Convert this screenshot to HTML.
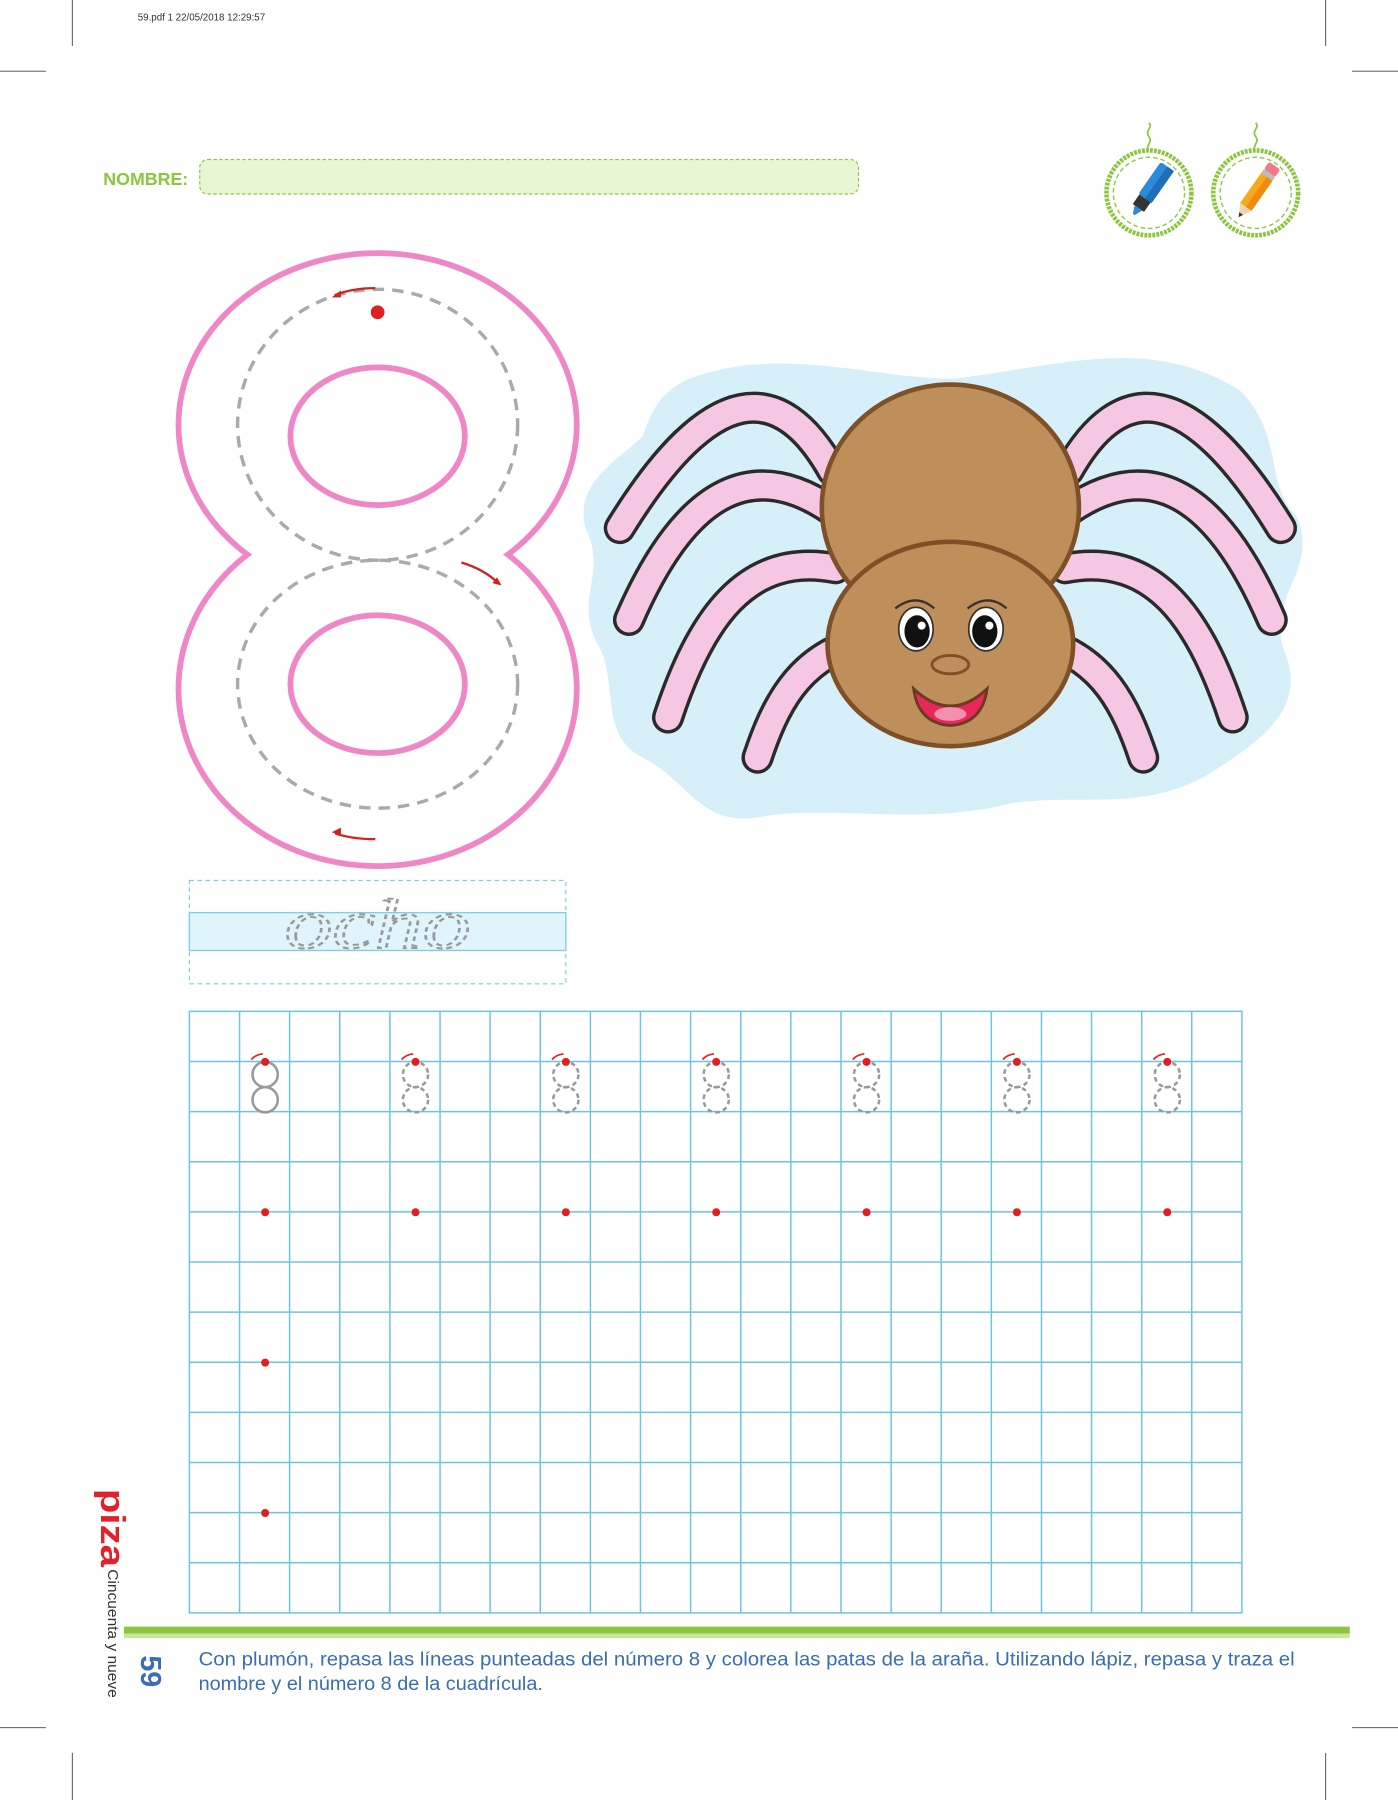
<!DOCTYPE html>
<html><head><meta charset="utf-8"><style>
html,body{margin:0;padding:0;background:#fff;}
svg{display:block;}
</style></head><body>
<svg width="1398" height="1800" viewBox="0 0 1218 1568" preserveAspectRatio="none" xmlns="http://www.w3.org/2000/svg" font-family="Liberation Sans, sans-serif">
<g stroke="#444" stroke-width="0.8">
<line x1="63" y1="0" x2="63" y2="40"/><line x1="1155" y1="0" x2="1155" y2="40"/>
<line x1="0" y1="62" x2="40" y2="62"/><line x1="1178" y1="62" x2="1218" y2="62"/>
<line x1="0" y1="1505" x2="40" y2="1505"/><line x1="1178" y1="1505" x2="1218" y2="1505"/>
<line x1="63" y1="1527" x2="63" y2="1568"/><line x1="1155" y1="1527" x2="1155" y2="1568"/>
</g>
<text x="120" y="18" font-size="8.5" fill="#333">59.pdf  1  22/05/2018  12:29:57</text>

<text x="90" y="161" font-size="15.5" fill="#8cc63f" font-weight="bold">NOMBRE:</text>
<rect x="174" y="139" width="574" height="30" rx="7" fill="#e7f6d3" stroke="#8cc63f" stroke-width="1" stroke-dasharray="3 2"/>

<g>
<path d="M1001,132 c-4,-5 4,-8 0,-13 c-4,-5 4,-8 0,-12" stroke="#8cc63f" stroke-width="1.5" fill="none"/>
<circle cx="1001" cy="168" r="37" fill="#fff" stroke="#8cc63f" stroke-width="4" stroke-dasharray="2.5 1"/>
<circle cx="1001" cy="168" r="31" fill="none" stroke="#8cc63f" stroke-width="1.2" stroke-dasharray="4 2.5"/>
<g transform="rotate(35 1001 168)">
<rect x="994" y="140" width="14" height="34" rx="2" fill="#2d8ad8"/>
<rect x="1001" y="140" width="7" height="34" fill="#1f6eb8"/>
<rect x="995" y="174" width="12" height="10" fill="#333"/>
<path d="M997,184 h8 l-3,7 h-2z" fill="#2d8ad8"/>
</g>
<path d="M1094,132 c-4,-5 4,-8 0,-13 c-4,-5 4,-8 0,-12" stroke="#8cc63f" stroke-width="1.5" fill="none"/>
<circle cx="1094" cy="168" r="37" fill="#fff" stroke="#8cc63f" stroke-width="4" stroke-dasharray="2.5 1"/>
<circle cx="1094" cy="168" r="31" fill="none" stroke="#8cc63f" stroke-width="1.2" stroke-dasharray="4 2.5"/>
<g transform="rotate(35 1094 168)">
<rect x="1088" y="139" width="12" height="8" rx="2" fill="#f07a8c"/>
<rect x="1088" y="147" width="12" height="4" fill="#bbb"/>
<rect x="1088" y="151" width="12" height="32" fill="#f7a81b"/>
<rect x="1094" y="151" width="6" height="32" fill="#f08a10"/>
<path d="M1088,183 h12 l-6,11z" fill="#f3d6a8"/>
<path d="M1092,190 h4 l-2,4z" fill="#333"/>
</g>
</g>

<g>
<ellipse cx="329" cy="370" rx="171" ry="147" fill="none" stroke="#ef86c8" stroke-width="10"/>
<ellipse cx="329" cy="600" rx="171" ry="152" fill="none" stroke="#ef86c8" stroke-width="10"/>
<ellipse cx="329" cy="370" rx="171" ry="147" fill="#fff"/>
<ellipse cx="329" cy="600" rx="171" ry="152" fill="#fff"/>
<ellipse cx="329" cy="380" rx="76" ry="60" fill="none" stroke="#ef86c8" stroke-width="5"/>
<ellipse cx="329" cy="596" rx="76" ry="60" fill="none" stroke="#ef86c8" stroke-width="5"/>
<ellipse cx="329" cy="370" rx="122" ry="118" fill="none" stroke="#aaa" stroke-width="3" stroke-dasharray="10 7"/>
<ellipse cx="329" cy="596" rx="122" ry="108" fill="none" stroke="#aaa" stroke-width="3" stroke-dasharray="10 7"/>
<circle cx="329" cy="272" r="6" fill="#e02020"/>
<path d="M327,251 q-20,0 -35,6" stroke="#d42020" stroke-width="2" fill="none"/><path d="M289,259 l8,-6 l0,6z" fill="#d42020"/>
<path d="M402,490 q20,6 32,18" stroke="#d42020" stroke-width="2" fill="none"/><path d="M437,510 l-8,-2 l4,-5z" fill="#d42020"/>
<path d="M327,731 q-20,0 -35,-5" stroke="#d42020" stroke-width="2" fill="none"/><path d="M289,725 l8,-4 l0,7z" fill="#d42020"/>
</g>

<g>
<path d="M600,330 C680,300 760,330 830,330 C920,320 1000,290 1080,340 C1120,380 1100,420 1130,450 C1150,500 1100,520 1120,570 C1140,620 1090,650 1060,670 C1000,710 940,690 880,700 C800,720 720,700 660,712 C610,720 600,680 560,660 C520,640 540,590 520,560 C500,520 530,500 510,460 C500,420 540,400 560,380 C570,350 580,340 600,330Z" fill="#d6eff9"/>
<g fill="none" stroke-linecap="round">
<g stroke="#2a2a2a" stroke-width="28">
<path d="M725,410 C680,330 620,330 540,460"/>
<path d="M725,445 C660,400 600,420 548,540"/>
<path d="M728,495 C650,480 610,540 582,625"/>
<path d="M745,560 C695,575 675,615 660,660"/>
<path d="M931,410 C976,330 1036,330 1116,460"/>
<path d="M931,445 C996,400 1056,420 1108,540"/>
<path d="M928,495 C1006,480 1046,540 1074,625"/>
<path d="M911,560 C961,575 981,615 996,660"/>
</g>
<g stroke="#f6c7e2" stroke-width="22">
<path d="M725,410 C680,330 620,330 540,460"/>
<path d="M725,445 C660,400 600,420 548,540"/>
<path d="M728,495 C650,480 610,540 582,625"/>
<path d="M745,560 C695,575 675,615 660,660"/>
<path d="M931,410 C976,330 1036,330 1116,460"/>
<path d="M931,445 C996,400 1056,420 1108,540"/>
<path d="M928,495 C1006,480 1046,540 1074,625"/>
<path d="M911,560 C961,575 981,615 996,660"/>
</g>
</g>
<ellipse cx="828" cy="442" rx="112" ry="107" fill="#be8f5b" stroke="#7e5027" stroke-width="4"/>
<ellipse cx="828" cy="561" rx="107" ry="89" fill="#be8f5b" stroke="#7e5027" stroke-width="4"/>
<ellipse cx="798" cy="548" rx="15" ry="19" fill="#fff" stroke="#333" stroke-width="1.5"/>
<ellipse cx="859" cy="548" rx="15" ry="19" fill="#fff" stroke="#333" stroke-width="1.5"/>
<ellipse cx="799" cy="550" rx="11" ry="14" fill="#111"/>
<ellipse cx="858" cy="550" rx="11" ry="14" fill="#111"/>
<circle cx="803" cy="545" r="3.5" fill="#fff"/><circle cx="862" cy="545" r="3.5" fill="#fff"/>
<path d="M780,530 q18,-14 34,0" stroke="#333" stroke-width="2" fill="none"/>
<path d="M843,530 q18,-14 34,0" stroke="#333" stroke-width="2" fill="none"/>
<ellipse cx="828" cy="579" rx="16" ry="8" fill="#be8f5b" stroke="#7e5027" stroke-width="2.5"/>
<path d="M796,600 q32,30 64,0 q-4,30 -32,32 q-28,-2 -32,-32z" fill="#e8285a" stroke="#6b3a1f" stroke-width="2.5"/>
<ellipse cx="828" cy="622" rx="14" ry="6" fill="#f58fb0"/>
</g>

<rect x="165" y="767" width="328" height="90" fill="none" stroke="#7fcfe0" stroke-width="1" stroke-dasharray="4 3"/>
<rect x="165" y="795" width="328" height="33" fill="#e0f4fb" stroke="#7fcfe0" stroke-width="1.2"/>
<text x="248" y="826" font-family="Liberation Serif, serif" font-style="italic" font-size="62" fill="none" stroke="#999" stroke-width="1.8" stroke-dasharray="4 3" textLength="162" lengthAdjust="spacingAndGlyphs">ocho</text>

<g stroke="#6cc5df" stroke-width="1.3">
<rect x="165" y="881" width="917" height="524" fill="none"/>
<path d="M208.7,881V1405M252.3,881V1405M296,881V1405M339.7,881V1405M383.4,881V1405M427,881V1405M470.7,881V1405M514.4,881V1405M558,881V1405M601.7,881V1405M645.4,881V1405M689,881V1405M732.7,881V1405M776.4,881V1405M820,881V1405M863.7,881V1405M907.4,881V1405M951,881V1405M994.7,881V1405M1038.3,881V1405"/>
<path d="M165,924.7H1082M165,968.3H1082M165,1012H1082M165,1055.7H1082M165,1099.3H1082M165,1143H1082M165,1186.7H1082M165,1230.3H1082M165,1274H1082M165,1317.7H1082M165,1361.3H1082"/>
</g>
<g fill="none" stroke-width="2.2">
<g stroke="#999"><circle cx="231" cy="936" r="11"/><circle cx="231" cy="958" r="11"/></g>
<g stroke="#999" stroke-dasharray="4 3">
<circle cx="362" cy="936" r="11"/><circle cx="362" cy="958" r="11"/>
<circle cx="493" cy="936" r="11"/><circle cx="493" cy="958" r="11"/>
<circle cx="624" cy="936" r="11"/><circle cx="624" cy="958" r="11"/>
<circle cx="755" cy="936" r="11"/><circle cx="755" cy="958" r="11"/>
<circle cx="886" cy="936" r="11"/><circle cx="886" cy="958" r="11"/>
<circle cx="1017" cy="936" r="11"/><circle cx="1017" cy="958" r="11"/>
</g>
</g>
<g fill="#e02020">
<circle cx="231" cy="925" r="3.5"/><circle cx="362" cy="925" r="3.5"/><circle cx="493" cy="925" r="3.5"/><circle cx="624" cy="925" r="3.5"/><circle cx="755" cy="925" r="3.5"/><circle cx="886" cy="925" r="3.5"/><circle cx="1017" cy="925" r="3.5"/>
<circle cx="231" cy="1056" r="3.5"/><circle cx="362" cy="1056" r="3.5"/><circle cx="493" cy="1056" r="3.5"/><circle cx="624" cy="1056" r="3.5"/><circle cx="755" cy="1056" r="3.5"/><circle cx="886" cy="1056" r="3.5"/><circle cx="1017" cy="1056" r="3.5"/>
<circle cx="231" cy="1187" r="3.5"/><circle cx="231" cy="1318" r="3.5"/>
</g>
<g stroke="#e02020" stroke-width="1.5" fill="none">
<path d="M229,918 q-7,1 -10,5"/><path d="M360,918 q-7,1 -10,5"/><path d="M491,918 q-7,1 -10,5"/><path d="M622,918 q-7,1 -10,5"/><path d="M753,918 q-7,1 -10,5"/><path d="M884,918 q-7,1 -10,5"/><path d="M1015,918 q-7,1 -10,5"/>
</g>

<rect x="108" y="1417" width="1068" height="6" fill="#8cc63f"/>
<rect x="108" y="1423" width="1068" height="4" fill="#c9e79b"/>

<g font-size="16.5" fill="#3a6db5">
<text x="173" y="1451" textLength="955" lengthAdjust="spacingAndGlyphs">Con plumón, repasa las líneas punteadas del número 8 y colorea las patas de la araña. Utilizando lápiz, repasa y traza el</text>
<text x="173" y="1472" textLength="300" lengthAdjust="spacingAndGlyphs">nombre y el número 8 de la cuadrícula.</text>
</g>

<g transform="translate(100,1297) rotate(90)">
<text x="0" y="12" font-size="30" font-weight="bold" fill="#e4202a" textLength="68" lengthAdjust="spacingAndGlyphs">piza</text>
<text x="70" y="6" font-size="13" fill="#333" textLength="112" lengthAdjust="spacingAndGlyphs">Cincuenta y nueve</text>
<text x="145" y="-23" font-size="25" font-weight="bold" fill="#3a6db5">59</text>
</g>
</svg>
</body></html>
